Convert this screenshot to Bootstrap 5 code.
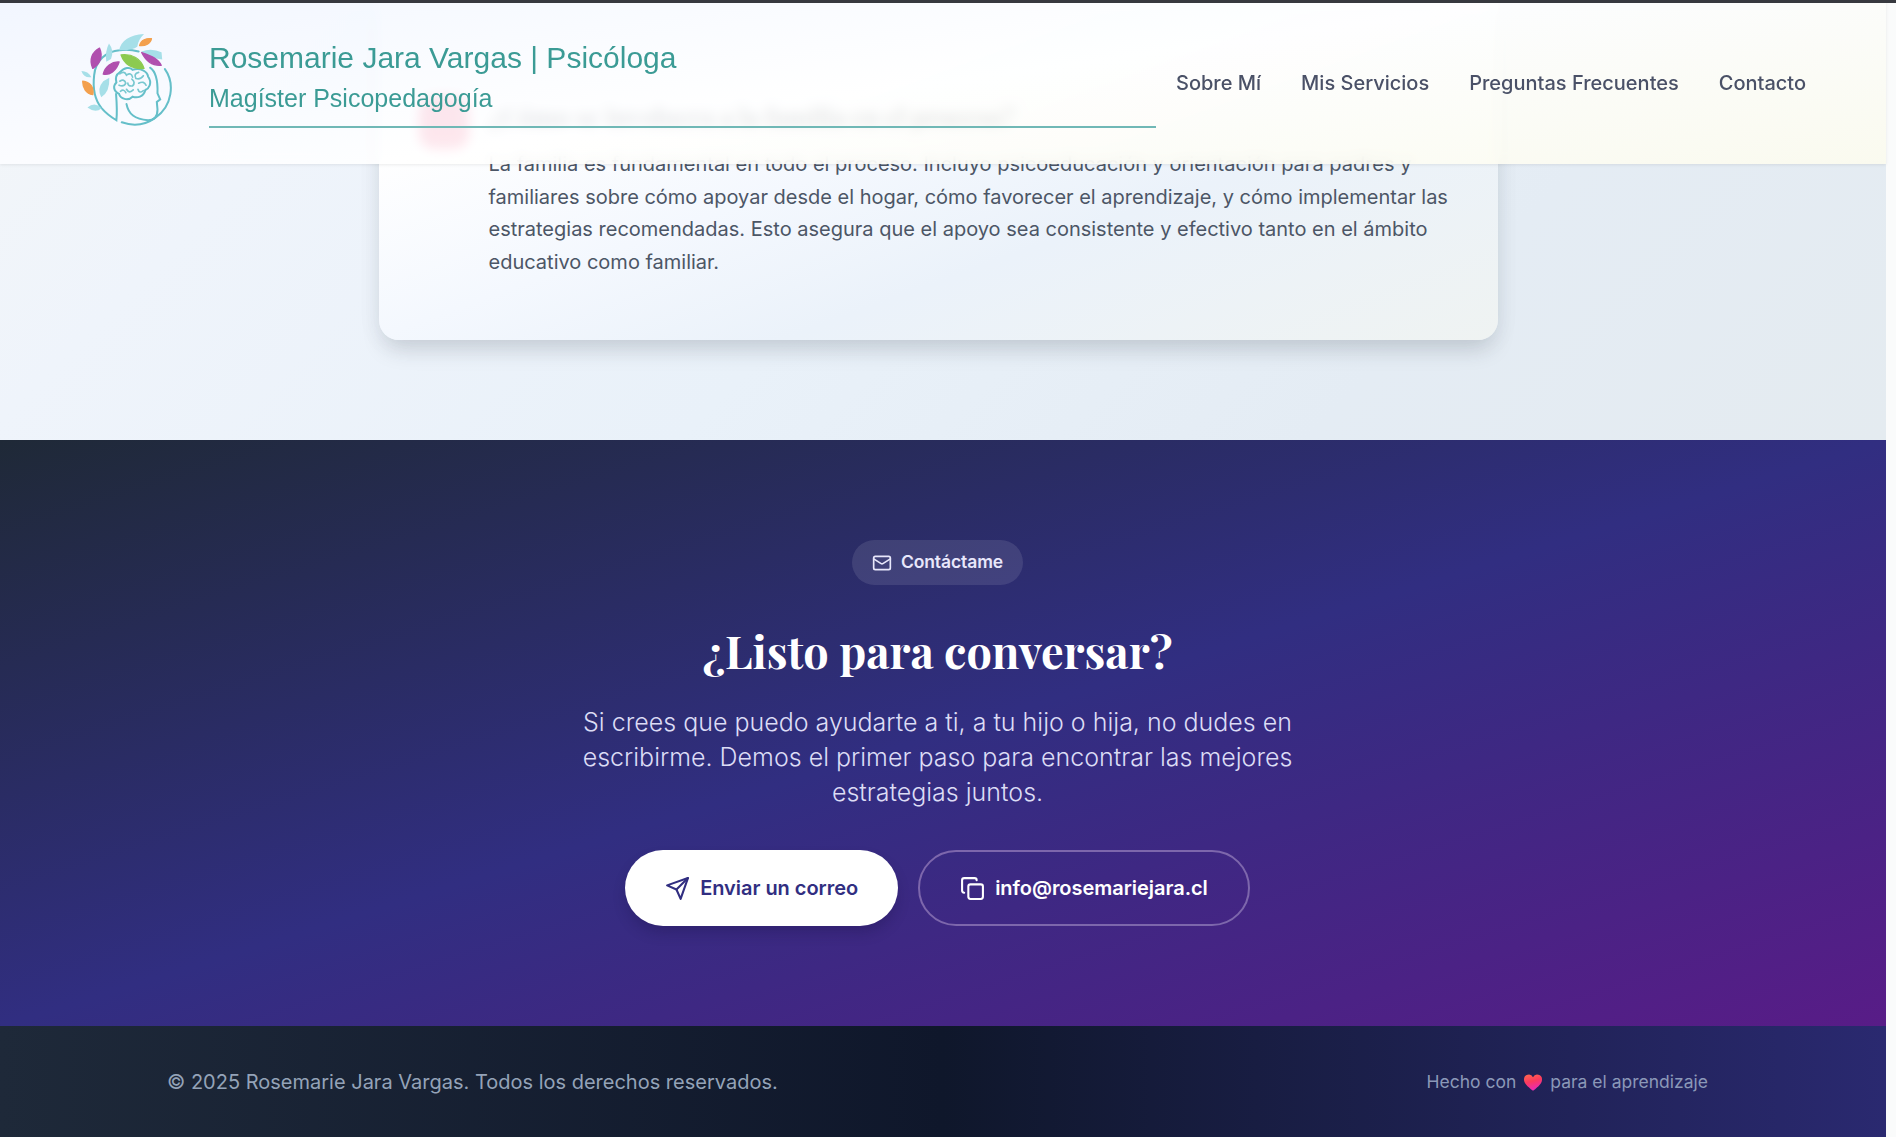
<!DOCTYPE html>
<html lang="es">
<head>
<meta charset="utf-8">
<meta name="viewport" content="width=device-width, initial-scale=1">
<title>Rosemarie Jara Vargas | Psicóloga</title>
<link rel="stylesheet" href="https://cdn.jsdelivr.net/npm/bootstrap@5.3.0/dist/css/bootstrap.min.css">
<style>
body{background:#fafbfb;font-family:Inter,sans-serif;font-size:20px;line-height:1.5;height:1137px;overflow:hidden}
.page-wrap{width:1886px;height:1137px;overflow:hidden}
.site-head{right:auto;width:1886px;height:164px;border-top:0;padding:2px 80px 0;background:linear-gradient(172deg,rgba(241,246,255,.88) 0%,rgba(255,255,255,.88) 50%,rgba(253,252,238,.88) 100%);backdrop-filter:blur(6px);box-shadow:0 1px 3px rgba(0,0,0,.08)}
.top-line{height:3px;background:#37393f;z-index:1040}
.brand-logo{width:93px;height:95px;margin-top:-7px}
.brand-text{width:947px;height:90px;margin-left:36px;border-bottom:2px solid #70b8b6;color:#3b9b95;font-family:"Liberation Sans",Arial,sans-serif}
.brand-name{font-size:30px;line-height:40px}
.brand-sub{font-size:25px;line-height:38px;margin-top:1px}
.site-nav{gap:40px;margin-left:20px;font-weight:500;color:#4a5167;white-space:nowrap}
.site-nav .nav-link{color:inherit}
.faq-zone{height:440px;padding-right:10px;background:linear-gradient(135deg,#f3f6f8 0%,#eff4fb 18%,#e9f1f9 48%,#e4ecf4 75%,#e4ebf0 100%)}
.faq-card{width:1119px;height:340px;border-radius:0 0 20px 20px;padding:96px 42px 0 40px;background:linear-gradient(160deg,#fff 20%,#f4f8fe 45%,#ebf2fa 65%,#eff3f2 100%);box-shadow:0 14px 22px -5px rgba(40,50,60,.17),0 3px 26px rgba(40,60,80,.05)}
.faq-icon{width:50px;height:53px;border-radius:15px;background:#f43f6e}
.faq-title{font-family:"Playfair Display","Liberation Serif",serif;font-weight:700;font-size:25px;line-height:40px;color:#1f2937;margin:0 0 12.4px;white-space:nowrap}
.faq-text{color:#4c5666;line-height:32.5px;width:970px}
.contact-zone{height:586px;padding:100px 11px 0 0;background:linear-gradient(to bottom right,#1f2937,#312e81 50%,#581c87)}
.pill-tag{height:45px;padding:0 20px;gap:9px;background:rgba(255,255,255,.1);color:#e8e7fb;font-size:17.5px;font-weight:600;letter-spacing:-.1px}
.contact-title{font-family:"Playfair Display","Liberation Serif",serif;font-weight:700;font-size:45px;line-height:60px;margin:35px 0 0}
.contact-lead{font-size:25px;font-weight:300;line-height:35px;color:#dcdcf5;width:730px;margin-top:25px}
.cta-row{gap:20px;margin-top:40px}
.cta{height:76px;padding:0 40px;gap:10px;font-weight:600;border-radius:38px;letter-spacing:-.03px}
.cta-light{background:#fff;color:#312e81;box-shadow:0 8px 14px -2px rgba(20,15,60,.28)}
.cta-line{border:2px solid #7d67ac;color:#fff}
.foot-zone{height:111px;padding:0 178px 0 167px;background:linear-gradient(90deg,#1e2939,#0f172b 50%,#2a2970);color:#94a3b8}
.foot-note{font-size:17.5px;color:#8b98b8;padding-top:2px}
</style>
</head>
<body>
<div class="top-line fixed-top"></div>
<header class="site-head fixed-top d-flex align-items-center">
  <svg class="brand-logo flex-shrink-0" viewBox="34 36 272 282" fill="none" stroke-linecap="round">
    <g stroke="#65bfc9" stroke-width="6">
      <path d="M74 164C78 122 110 92 150 90q28-4 56 4M74 164c-5 42 4 76 22 98M98 264c12 14 26 24 42 34q3-28-1-78"/>
      <path d="M284 146c30 42 22 110-28 144-30 22-66 26-100 14"/>
      <path d="M170 250c6 30 24 44 64 48 22 0 28-14 28-32l-2-22 10-8-8-18q2-60-22-76"/>
      <path d="M150 156c14-16 30-16 38-8 24-8 44 6 46 20 14 20 2 36-8 40-6 22-24 24-38 20-14 14-36 6-40-8-18-10-18-24-8-34-4-14 0-24 10-30Z"/>
    </g>
    <g stroke="#78c8d0" stroke-width="5">
      <path d="M150 160q14-10 20 4 14-10 18 6M206 156q-16 4-8 18 14 4 22-8M150 182q14-8 18 6-6 12-20 6M186 176q12 10 2 20-14 2-14-8M206 188q16-8 22 6M170 206q8 14 20 2M204 206q4 14 16 4M152 212q10-8 16 4"/>
    </g>
    <path fill="#a6dfe8" d="M148 90Q158 46 222 42Q204 60 202 80Q186 92 148 90ZM118 70q16 20 6 46l-14 8q-4-32 8-54ZM214 94q30-12 60 2l2 22q-36-4-62-24ZM36 152q20 0 30 18-22 4-30-18ZM119 172q2 42-24 58-14-26 6-48ZM54 260q22-18 42 2-18 16-42-2Z"/>
    <g stroke-width="4" stroke-linejoin="round">
      <path fill="#b04fae" stroke="#b04fae" d="M90 84c12 26 0 48-20 60-12-26-2-48 20-60ZM148 125c-8 26-28 40-47 36 5-22 26-38 47-36ZM215 97c24 9 48 16 58 38-26 2-46-14-58-38Z"/>
      <path fill="#8cca50" stroke="#8cca50" d="M154 104c34-4 58 12 68 40-34 2-58-12-68-40Z"/>
      <path fill="#f3a04e" stroke="#f3a04e" d="M244 56c-2 14-18 22-35 20 4-16 20-22 35-20ZM40 182c22 2 34 18 30 40-20-3-30-20-30-40Z"/>
    </g>
  </svg>
  <div class="brand-text flex-shrink-0">
    <div class="brand-name">Rosemarie Jara Vargas | Psicóloga</div>
    <div class="brand-sub">Magíster Psicopedagogía</div>
  </div>
  <nav class="nav site-nav flex-nowrap">
    <a class="nav-link p-0" href="#">Sobre Mí</a>
    <a class="nav-link p-0" href="#">Mis Servicios</a>
    <a class="nav-link p-0" href="#">Preguntas Frecuentes</a>
    <a class="nav-link p-0" href="#">Contacto</a>
  </nav>
</header>

<div class="page-wrap">
  <section class="faq-zone d-flex justify-content-center align-items-start">
    <article class="faq-card d-flex align-items-start">
      <div class="faq-icon flex-shrink-0"></div>
      <div class="ms-3 ps-1">
        <h3 class="faq-title">¿Cómo se involucra a la familia en el proceso?</h3>
        <p class="faq-text mb-0">La familia es fundamental en todo el proceso. Incluyo psicoeducación y orientación para padres y<br>familiares sobre cómo apoyar desde el hogar, cómo favorecer el aprendizaje, y cómo implementar las<br>estrategias recomendadas. Esto asegura que el apoyo sea consistente y efectivo tanto en el ámbito<br>educativo como familiar.</p>
      </div>
    </article>
  </section>

  <section class="contact-zone d-flex flex-column align-items-center text-center text-white">
    <span class="pill-tag rounded-pill d-inline-flex align-items-center">
      <svg width="20" height="20" viewBox="0 0 24 24" fill="none" stroke="currentColor" stroke-width="2" stroke-linecap="round" stroke-linejoin="round"><rect x="2" y="4" width="20" height="16" rx="2"/><path d="m22 7-8.97 5.7a1.94 1.94 0 0 1-2.06 0L2 7"/></svg>
      Contáctame
    </span>
    <h2 class="contact-title">¿Listo para conversar?</h2>
    <p class="contact-lead mb-0">Si crees que puedo ayudarte a ti, a tu hijo o hija, no dudes en<br>escribirme. Demos el primer paso para encontrar las mejores<br>estrategias juntos.</p>
    <div class="d-flex cta-row">
      <a href="#" class="cta cta-light d-inline-flex align-items-center text-decoration-none">
        <svg width="25" height="25" viewBox="0 0 24 24" fill="none" stroke="currentColor" stroke-width="2" stroke-linecap="round" stroke-linejoin="round"><path d="m22 2-7 20-4-9-9-4Z"/><path d="M22 2 11 13"/></svg>
        Enviar un correo
      </a>
      <a href="#" class="cta cta-line d-inline-flex align-items-center text-decoration-none">
        <svg width="25" height="25" viewBox="0 0 24 24" fill="none" stroke="currentColor" stroke-width="2" stroke-linecap="round" stroke-linejoin="round"><rect x="8" y="8" width="14" height="14" rx="2"/><path d="M4 16c-1.1 0-2-.9-2-2V4c0-1.1.9-2 2-2h10c1.1 0 2 .9 2 2"/></svg>
        info@rosemariejara.cl
      </a>
    </div>
  </section>

  <footer class="foot-zone d-flex align-items-center justify-content-between">
    <span>© 2025 Rosemarie Jara Vargas. Todos los derechos reservados.</span>
    <span class="foot-note d-inline-flex align-items-center">Hecho con
      <svg class="mx-2" width="18" height="17" viewBox="0 0 24 22"><defs><linearGradient id="hg" x1="0" y1="0" x2=".3" y2="1"><stop offset="0" stop-color="#ff6a4d"/><stop offset=".5" stop-color="#fb3a5e"/><stop offset="1" stop-color="#e92bb4"/></linearGradient></defs><path fill="url(#hg)" d="M12 22C4 16 0 12 0 7a6.300 6.300 0 0 1 12-3 6.300 6.300 0 0 1 12 3c0 5-4 9-12 15Z"/></svg>
      para el aprendizaje</span>
  </footer>
</div>
<script src="https://cdn.jsdelivr.net/npm/bootstrap@5.3.0/dist/js/bootstrap.bundle.min.js"></script>
</body>
</html>
